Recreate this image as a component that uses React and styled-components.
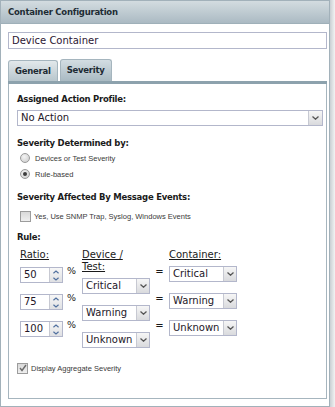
import React from 'react';
import styled, { createGlobalStyle } from 'styled-components';

const GlobalStyle = createGlobalStyle`
    body {
        margin: 0;
        background: #fff;
        font-family: "DejaVu Sans", Verdana, sans-serif;
    }
`;

const Frame = styled.div`
    display: flex;
    width: 335px;
    height: 407px;
`;

const Panel = styled.div`
    display: flex;
    flex-direction: column;
    width: 328px;
    height: 405px;
    border: 1px solid #a2b1ba;
    background: #fff;
`;

const Shadow = styled.div`
    flex: 1;
    background: linear-gradient(to right, #c9cfd3, #f3f3f3);
`;

const Header = styled.div`
    height: 22px;
    line-height: 22px;
    padding-left: 7px;
    background: linear-gradient(#d3dce0, #abbac3);
    border-bottom: 1px solid #9fb0b9;
    font-size: 8.5px;
    font-weight: bold;
    letter-spacing: -0.25px;
    color: #1e2c35;
`;

const Body = styled.div`
    flex: 1;
    display: flex;
    flex-direction: column;
    padding: 8px 2px 7px 7px;
`;

const NameInput = styled.div`
    height: 15px;
    line-height: 15px;
    padding-left: 3px;
    border: 1px solid #b3b7cb;
    font-size: 10px;
    color: #2c1632;
`;

const Tabs = styled.div`
    display: flex;
    align-items: flex-end;
    gap: 2px;
    margin-top: 10px;
`;

const Tab = styled.div`
    height: ${p => (p.$active ? 21 : 20)}px;
    line-height: ${p => (p.$active ? 21 : 20)}px;
    padding: 0 6px;
    border: 1px solid #a5b5be;
    border-bottom: none;
    border-radius: 3px 3px 0 0;
    background: ${p => (p.$active
        ? 'linear-gradient(#d3dde2, #a9bac3)'
        : 'linear-gradient(#e2e8eb, #b8c6cd)')};
    font-size: 8.5px;
    font-weight: bold;
    letter-spacing: -0.25px;
    color: #1d2a33;
`;

const TabBand = styled.div`
    height: 3px;
    background: #8da2ad;
`;

const TabContent = styled.div`
    flex: 1;
    display: flex;
    flex-direction: column;
    padding: 0 8px;
    border: 1px solid #a6b5be;
    border-top: none;
`;

const Label = styled.div`
    margin-top: ${p => p.$top}px;
    height: 12px;
    line-height: 12px;
    font-size: 8.5px;
    font-weight: bold;
    letter-spacing: -0.25px;
    color: #1b1b1b;
`;

const SelectBox = styled.div`
    display: flex;
    width: ${p => p.$width}px;
    height: 14px;
    margin-top: ${p => p.$top || 0}px;
    border: 1px solid #b3b7cb;
    background: #fff;
    font-size: 10px;
    line-height: 14px;
    color: #231627;
`;

const SelectText = styled.div`
    flex: 1;
    padding-left: 3px;
    overflow: hidden;
    white-space: nowrap;
`;

const ArrowBox = styled.div`
    display: flex;
    align-items: center;
    justify-content: center;
    width: ${p => p.$width || 12}px;
    border-left: 1px solid #c7c9d2;
    background: linear-gradient(#f6f6f6, #d9dadd);
`;

const Option = styled.label`
    display: flex;
    align-items: center;
    gap: ${p => p.$gap}px;
    height: 14px;
    margin-top: ${p => p.$top}px;
    padding-left: ${p => p.$indent}px;
    font-family: "Liberation Sans", Arial, sans-serif;
    font-size: 7.5px;
    color: #3a3a3a;
`;

const Radio = styled.span`
    position: relative;
    width: 8px;
    height: 8px;
    border: 1px solid #9a9a9a;
    border-radius: 50%;
    background: radial-gradient(circle at 40% 35%, #f4f4f4, #c9c9c9);

    &::after {
        content: '';
        display: ${p => (p.$checked ? 'block' : 'none')};
        position: absolute;
        left: 2px;
        top: 2px;
        width: 4px;
        height: 4px;
        border-radius: 50%;
        background: #3c3c3c;
    }
`;

const Check = styled.span`
    display: flex;
    align-items: center;
    justify-content: center;
    width: ${p => p.$size}px;
    height: ${p => p.$size}px;
    border: 1px solid #9c9c9c;
    background: linear-gradient(#d9d9d9, #efefef);
`;

const RuleTable = styled.div`
    display: flex;
    margin-top: 6px;
    padding-left: 3px;
`;

const Column = styled.div`
    display: flex;
    flex-direction: column;
    gap: 11px;
    width: ${p => p.$width}px;
`;

const ColHead = styled.div`
    margin-bottom: ${p => p.$after}px;
    line-height: 12px;
    font-size: 10px;
    text-decoration: underline;
    color: #1a1a1a;
`;

const RatioRow = styled.div`
    display: flex;
    align-items: flex-start;
`;

const Spinner = styled.div`
    display: flex;
    width: 41px;
    height: 14px;
    border: 1px solid #b3b7cb;
    font-size: 10px;
    line-height: 14px;
    color: #231627;
`;

const SpinButtons = styled.div`
    display: flex;
    flex-direction: column;
    align-items: center;
    justify-content: space-around;
    width: 12px;
    border-left: 1px solid #c7c9d2;
    background: linear-gradient(#f7f7f7, #dfe0e3);
`;

const Pct = styled.div`
    margin: -2px 0 0 4px;
    line-height: 12px;
    font-size: 9.5px;
    color: #1a1a1a;
`;

const EqCell = styled.div`
    height: 16px;
    line-height: 12px;
    text-align: center;
    font-size: 10px;
    color: #1a1a1a;
`;

const EqHead = styled.div`
    height: 12px;
    margin-bottom: ${p => p.$after}px;
`;

const Chevron = ({ up, color = '#555', w = 7 }) => (
    <svg width={w} height="4" viewBox="0 0 7 4">
        <path
            d={up ? 'M0.5 3.5 L3.5 0.8 L6.5 3.5' : 'M0.5 0.5 L3.5 3.2 L6.5 0.5'}
            fill="none"
            stroke={color}
            strokeWidth="1.3"
        />
    </svg>
);

const Select = ({ value, width, top, arrow }) => (
    <SelectBox $width={width} $top={top}>
        <SelectText>{value}</SelectText>
        <ArrowBox $width={arrow}>
            <Chevron />
        </ArrowBox>
    </SelectBox>
);

const RatioInput = ({ value }) => (
    <RatioRow>
        <Spinner>
            <SelectText>{value}</SelectText>
            <SpinButtons>
                <Chevron up color="#4f6f9e" w={6} />
                <Chevron color="#4f6f9e" w={6} />
            </SpinButtons>
        </Spinner>
        <Pct>%</Pct>
    </RatioRow>
);

const Tick = () => (
    <svg width="8" height="8" viewBox="0 0 8 8">
        <path d="M1 4 L3 6.5 L7 1" fill="none" stroke="#6b6b6b" strokeWidth="1.4" />
    </svg>
);

const rules = [
    { ratio: '50', device: 'Critical', container: 'Critical' },
    { ratio: '75', device: 'Warning', container: 'Warning' },
    { ratio: '100', device: 'Unknown', container: 'Unknown' },
];

const App = () => {
    return (
        <>
            <GlobalStyle />
            <Frame>
                <Panel>
                    <Header>Container Configuration</Header>
                    <Body>
                        <NameInput>Device Container</NameInput>
                        <Tabs>
                            <Tab>General</Tab>
                            <Tab $active>Severity</Tab>
                        </Tabs>
                        <TabBand />
                        <TabContent>
                            <Label $top={9}>Assigned Action Profile:</Label>
                            <Select value="No Action" width={304} top={5} arrow={13} />

                            <Label $top={11}>Severity Determined by:</Label>
                            <Option $top={2} $gap={5} $indent={3}>
                                <Radio />
                                Devices or Test Severity
                            </Option>
                            <Option $top={2} $gap={5} $indent={3}>
                                <Radio $checked />
                                Rule-based
                            </Option>

                            <Label $top={10}>Severity Affected By Message Events:</Label>
                            <Option $top={6} $gap={3} $indent={3}>
                                <Check $size={9} />
                                Yes, Use SNMP Trap, Syslog, Windows Events
                            </Option>

                            <Label $top={8}>Rule:</Label>
                            <RuleTable>
                                <Column $width={62}>
                                    <ColHead $after={-5}>Ratio:</ColHead>
                                    {rules.map(r => <RatioInput key={r.ratio} value={r.ratio} />)}
                                </Column>
                                <Column $width={68}>
                                    <ColHead $after={-6}>Device /<br />Test:</ColHead>
                                    {rules.map(r => <Select key={r.ratio} value={r.device} width={66} />)}
                                </Column>
                                <Column $width={19}>
                                    <EqHead $after={-6} />
                                    {rules.map(r => <EqCell key={r.ratio}>=</EqCell>)}
                                </Column>
                                <Column $width={68}>
                                    <ColHead $after={-6}>Container:</ColHead>
                                    {rules.map(r => <Select key={r.ratio} value={r.container} width={66} />)}
                                </Column>
                            </RuleTable>

                            <Option $top={13} $gap={3} $indent={0}>
                                <Check $size={9}><Tick /></Check>
                                Display Aggregate Severity
                            </Option>
                        </TabContent>
                    </Body>
                </Panel>
                <Shadow />
            </Frame>
        </>
    );
};

export default App;
